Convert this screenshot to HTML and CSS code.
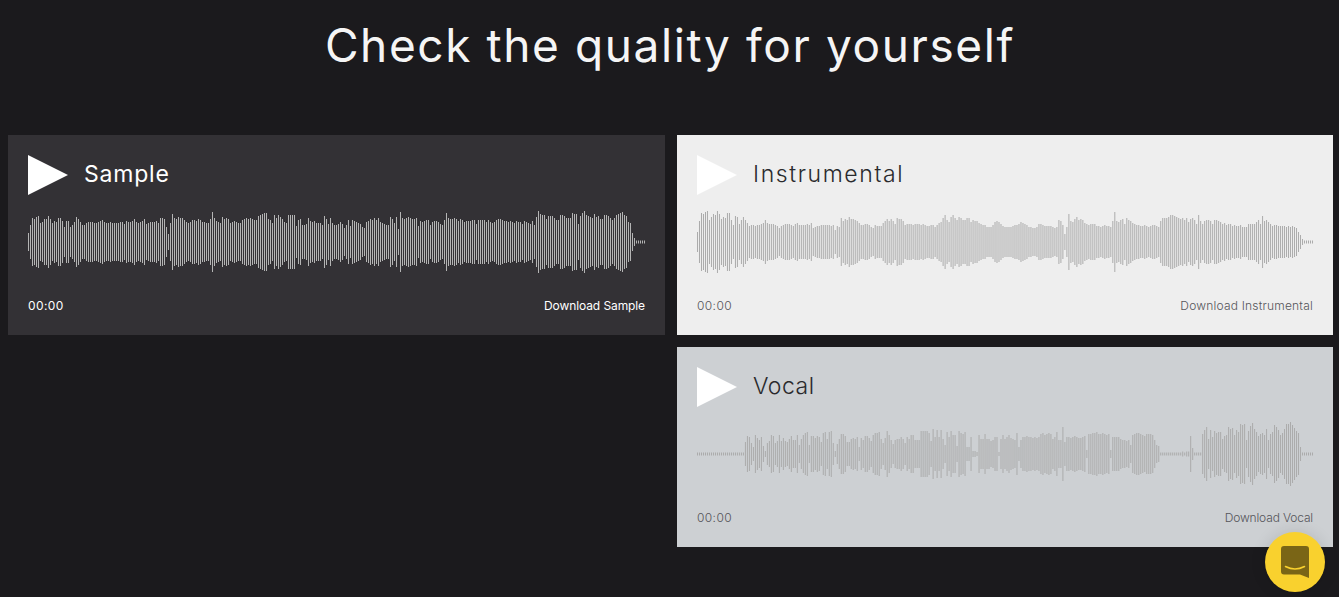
FILE: index.html
```html
<!DOCTYPE html>
<html lang="en">
<head>
    <meta charset="UTF-8">
    <meta name="viewport" content="width=device-width, initial-scale=1.0">
    <title>Check the quality for yourself</title>
    <link rel="stylesheet" href="styles.css">
</head>
<body>
    <h1 class="page-title">Check the quality for yourself</h1>
    <div class="samples">
        <div class="track track-dark">
            <div class="track-head">
                <svg class="play" viewBox="0 0 40 40"><polygon points="0,0 40,20 0,40"/></svg>
                <span class="track-name">Sample</span>
            </div>
            <svg class="wave" id="wave-sample" data-span="616" width="617" height="64"><path/></svg>
            <div class="track-foot">
                <span>00:00</span>
                <a href="#">Download Sample</a>
            </div>
        </div>
        <div class="track track-light">
            <div class="track-head">
                <svg class="play" viewBox="0 0 40 40"><polygon points="0,0 40,20 0,40"/></svg>
                <span class="track-name">Instrumental</span>
            </div>
            <svg class="wave" id="wave-instrumental" data-span="615" width="616" height="64"><path/></svg>
            <div class="track-foot">
                <span>00:00</span>
                <a href="#">Download Instrumental</a>
            </div>
        </div>
        <div class="track track-grey">
            <div class="track-head">
                <svg class="play" viewBox="0 0 40 40"><polygon points="0,0 40,20 0,40"/></svg>
                <span class="track-name">Vocal</span>
            </div>
            <svg class="wave" id="wave-vocal" data-span="615" width="616" height="64"><path/></svg>
            <div class="track-foot">
                <span>00:00</span>
                <a href="#">Download Vocal</a>
            </div>
        </div>
    </div>

    <button class="chat" aria-label="Open chat">
        <svg viewBox="0 0 60 60" width="60" height="60">
            <path class="chat-bubble" d="M19 14h22a3 3 0 0 1 3 3v29l-9-3.500H19a3 3 0 0 1-3-3V17a3 3 0 0 1 3-3z"/>
            <path class="chat-smile" d="M20.500 34.500q9.500 5 19 0"/>
        </svg>
    </button>

    <script src="wave.js"></script>
</body>
</html>
```

FILE: styles.css
```css
* {box-sizing: border-box;}
html, body {height: 100%;}
body {margin: 0; overflow: hidden; background: #1b1a1d; font-family: Inter, "Liberation Sans", sans-serif;}

.page-title {margin: 0; padding: 17px 0 62px 1px; font-size: 46px; line-height: 56px; font-weight: 400; letter-spacing: 1.6px; text-align: center; color: #f5f5f5;}

.samples {display: grid; grid-template-columns: 1fr 1fr; gap: 12px; width: 1325px; margin-left: 8px;}
.track {display: flex; flex-direction: column; height: 200px; padding: 20px;}
.track-dark {background: #333135; color: #ffffff;}
.track-light {background: #eeeeee; color: #2a2a2d;}
.track-grey {background: #cdd0d3; color: #2a2a2d; grid-column: 2;}

.track-head {display: flex; align-items: center; gap: 16px;}
.play {width: 40px; height: 40px; fill: #ffffff; flex: none;}
.track-name {padding-bottom: 2px; font-size: 23px; font-weight: 300; letter-spacing: 0.5px;}
.track-dark .track-name {font-weight: 400; letter-spacing: 0.8px;}
.track-light .track-name {letter-spacing: 1.6px;}

.wave {display: block; margin-top: 15px; overflow: visible; flex: none;}
.wave path {stroke: #ababab; stroke-width: 1; fill: none;}
.track-dark .wave path {stroke: #b4b4b4;}

.track-foot {display: flex; justify-content: space-between; align-items: center; margin-top: auto; height: 18px; padding-bottom: 2px; font-size: 12px; font-weight: 300;}
.track-foot span {letter-spacing: 0.4px;}
.track-foot a {color: inherit; text-decoration: none;}
.track-dark .track-foot {font-weight: 400;}
.track-dark .track-foot a {letter-spacing: -0.1px;}
.track-light .track-foot, .track-grey .track-foot {color: #55555a;}
.track-light .track-foot a {letter-spacing: 0.2px;}
.track-grey .track-foot a {letter-spacing: -0.15px;}

.chat {position: fixed; right: 14px; bottom: 5px; width: 60px; height: 60px; padding: 0; border: 0; border-radius: 50%; background: #f9d12e; box-shadow: 0 0 16px rgba(0, 0, 0, 0.12); cursor: pointer;}
.chat svg {display: block;}
.chat-bubble {fill: #7a6516;}
.chat-smile {fill: none; stroke: #f9d12e; stroke-width: 1.6; stroke-linecap: round;}
```

FILE: wave.js
```js
// half height of every bar, in px
const peaks = {
    "wave-sample": [
        9,17,24,23,25,26,19,20,23,23,26,23,19,21,20,24,24,21,15,21,
        21,15,17,20,25,23,20,17,17,19,20,20,20,19,19,20,21,22,20,19,
        19,20,19,19,19,19,20,20,18,21,20,20,21,23,20,19,20,21,23,18,
        19,20,20,20,21,19,24,24,23,15,8,19,28,24,23,25,24,24,22,20,
        19,20,22,22,21,23,22,20,20,19,19,23,30,24,21,20,19,25,23,24,
        23,19,20,21,20,19,19,22,23,24,23,24,23,22,22,26,27,28,29,29,
        23,22,19,27,24,27,25,23,20,19,27,27,27,27,16,22,23,17,17,18,
        24,21,20,21,19,19,19,17,26,23,18,24,19,17,17,18,20,18,14,17,
        22,16,22,21,20,19,18,15,14,20,21,23,22,24,22,24,20,19,18,17,
        17,25,23,19,25,13,30,24,23,24,25,24,23,23,24,16,21,20,21,22,
        22,17,20,21,21,20,18,17,22,29,24,23,23,24,23,21,23,22,20,21,
        21,21,22,22,18,22,22,22,22,20,22,20,19,20,22,23,23,22,21,21,
        20,21,20,19,21,20,20,18,21,20,19,18,21,17,25,31,28,27,27,23,
        26,26,26,24,22,22,27,27,26,24,24,24,29,28,28,18,26,29,31,27,
        26,25,24,28,25,26,23,23,27,27,26,24,22,24,27,28,29,30,27,26,
        20,19,9,4,1.5,1.5,1.5,1.5,1.5
    ],
    "wave-instrumental": [
        10,21,29,28,30,31,22,25,28,27,31,28,23,25,24,29,29,22,17,26,
        25,18,22,25,22,19,16,17,17,16,17,17,18,19,22,19,18,18,18,17,
        16,14,16,17,18,18,18,17,16,18,19,17,17,17,17,18,17,19,14,15,
        16,16,17,17,17,17,17,16,17,12,16,15,24,21,23,22,25,23,23,22,
        21,19,17,17,18,18,17,15,14,17,16,16,16,19,21,23,21,23,21,18,
        24,23,23,21,17,18,18,18,17,18,18,18,17,18,17,16,16,17,17,15,
        17,19,20,24,27,22,20,25,27,24,22,25,24,22,22,24,24,20,22,21,
        21,19,18,17,17,15,15,15,17,20,21,20,18,16,15,15,15,15,16,17,
        17,18,20,19,18,17,15,15,14,14,15,18,18,17,16,16,16,16,15,14,
        15,22,21,17,8,15,28,21,20,23,25,22,23,22,19,18,17,18,18,18,
        16,16,15,16,17,16,16,15,21,30,21,20,22,23,18,24,22,21,19,18,
        17,17,16,16,17,16,15,16,17,17,16,15,21,24,24,24,25,27,27,26,
        25,24,23,24,22,24,20,23,24,22,18,27,21,18,21,22,22,21,18,22,
        22,21,20,18,19,17,18,18,16,17,16,16,17,15,15,15,18,18,18,18,
        20,22,18,26,21,22,20,18,16,17,17,16,16,16,16,15,16,15,16,15,
        14,10,7,3,1.5,1.5,1.5,1.5,1.5
    ],
    "wave-vocal": [
        1.5,1.5,1.5,1.5,1.5,1.5,1.5,1.5,1.5,1.5,1.5,1.5,1.5,1.5,1.5,1.5,1.5,1.5,1.5,1.5,
        1.5,1.5,1.5,1.5,12,18,17,11,7,19,16,14,17,8,3,11,13,19,18,11,
        13,19,13,16,13,12,15,18,14,14,19,9,15,19,21,22,9,18,18,16,
        18,17,12,21,22,15,22,23,11,3,10,15,20,20,18,12,12,15,16,15,
        17,7,16,14,18,18,16,13,19,21,21,22,15,11,16,23,19,14,10,14,
        15,15,17,15,11,17,15,19,19,14,14,14,23,23,23,23,21,13,25,17,
        24,17,24,15,9,22,17,23,19,19,8,23,21,20,22,7,7,17,3,3,
        2,19,15,15,20,15,15,13,14,17,17,2,15,19,15,17,19,16,15,14,
        21,7,14,17,17,18,17,17,16,17,16,17,20,21,19,20,21,20,15,17,
        22,14,14,27,12,17,17,16,17,18,17,16,16,17,18,4,20,20,21,21,
        22,20,20,21,20,19,20,4,17,17,17,17,15,14,14,13,14,9,19,20,
        21,21,20,19,18,20,20,20,19,14,9,8,1.5,1.5,1.5,1.5,1.5,1.5,1.5,1.5,
        1.5,1.5,1.5,2.5,1.5,2.5,2.5,18,6,1.5,1.5,1.5,1.5,20,24,27,15,24,17,23,
        21,22,22,15,18,19,27,25,26,19,24,22,30,29,30,14,23,28,31,25,
        22,18,20,21,19,25,14,20,22,29,27,24,19,21,25,30,30,32,29,26,
        23,21,7,1.5,1.5,1.5,1.5,1.5,1.5
    ]
};

for (const id in peaks) {
    const svg = document.getElementById(id);
    const bars = peaks[id];
    const step = svg.dataset.span / (bars.length - 1);
    let d = "";
    bars.forEach((h, i) => {
        d += `M${(i * step + 0.5).toFixed(3)} ${32 - h}V${32 + h}`;
    });
    svg.querySelector("path").setAttribute("d", d);
}
```
